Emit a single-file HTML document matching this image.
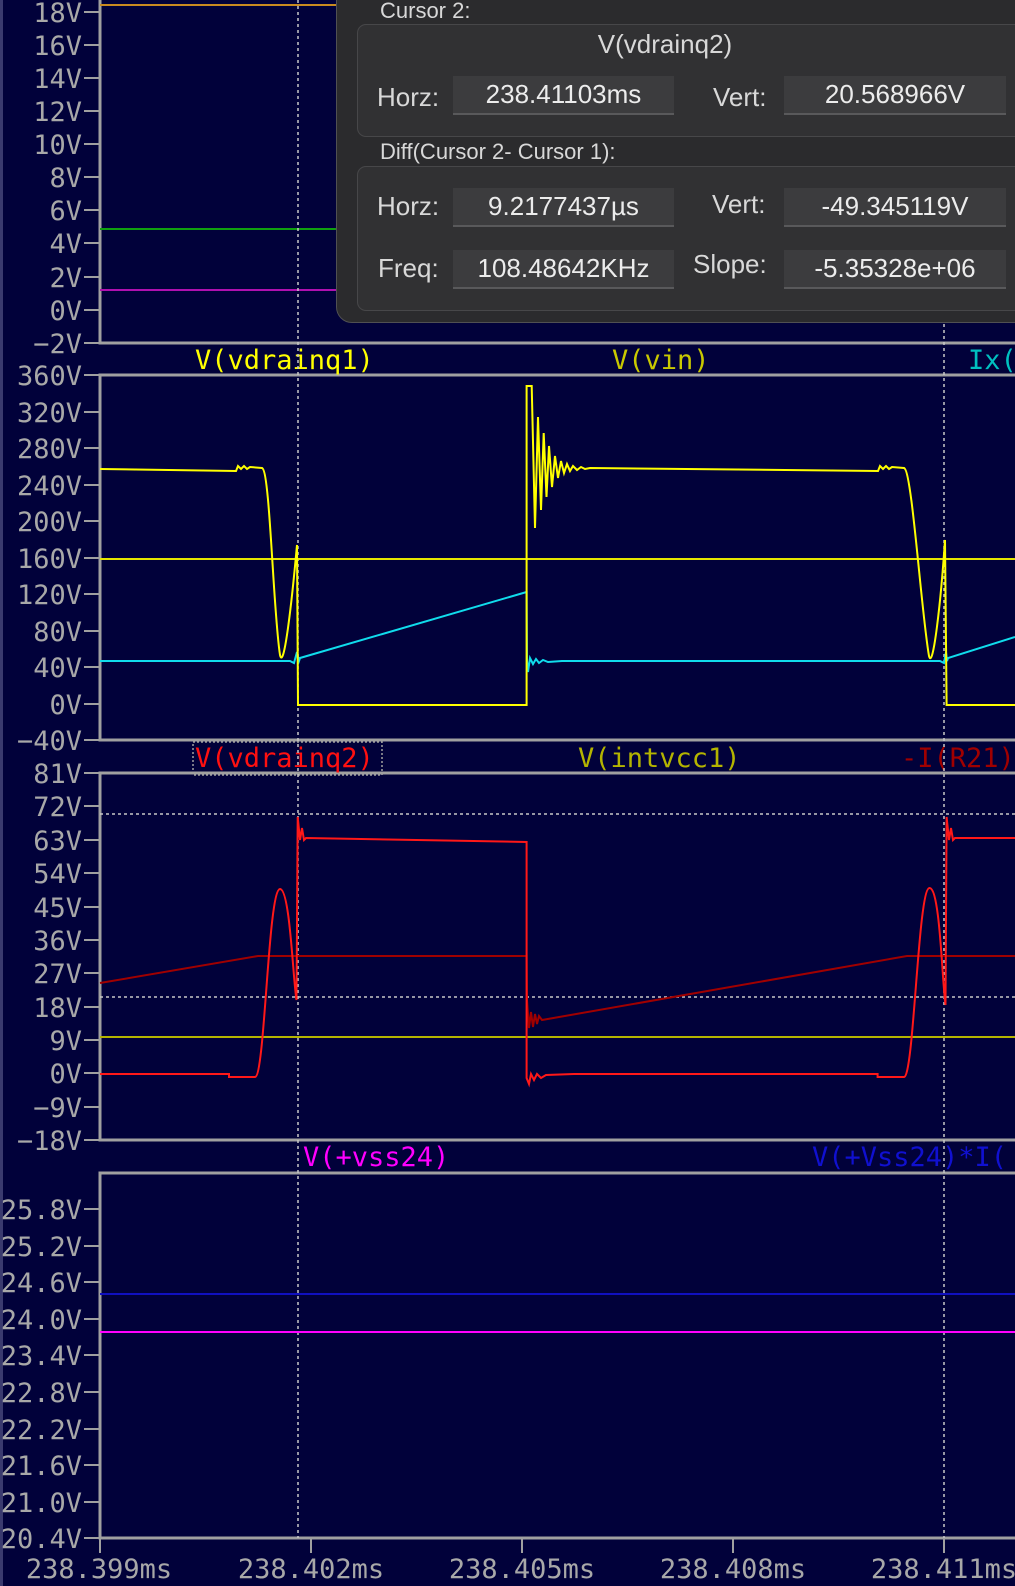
<!DOCTYPE html>
<html><head><meta charset="utf-8"><style>
html,body{margin:0;padding:0;background:#01013a;}
body{width:1015px;height:1586px;overflow:hidden;position:relative;}
svg{position:absolute;left:0;top:0}
.m{font-family:"DejaVu Sans Mono","Liberation Mono",monospace;font-size:27px;}
.y{fill:#a8a8a8;text-anchor:end}
.dlg{position:absolute;left:336px;top:-20px;width:700px;height:343px;background:#2b2b2d;border:1.5px solid #505052;border-radius:16px;font-family:"Liberation Sans",sans-serif;color:#d8d8d8;box-sizing:border-box}
.dlg div{position:absolute;white-space:nowrap}
.box{border:1.5px solid #474749;background:#313133;border-radius:9px}
.f{background:#3c3c3e;border-bottom:2px solid #59595b;text-align:center;font-size:26px;color:#ececec;line-height:37px}
.l{font-size:26px}
</style></head><body>
<svg width="1015" height="1586" viewBox="0 0 1015 1586">
<rect x="0" y="0" width="1015" height="1586" fill="#01013a"/>
<rect x="0" y="0" width="3" height="1586" fill="#3a3a6e"/>
<!-- frames -->
<g stroke="#a0a0a0" stroke-width="3" fill="none">
<path d="M100,0 V343 H1015"/>
<path d="M1015,375 H100 V740 H1015"/>
<path d="M1015,773 H100 V1140 H1015"/>
<path d="M1015,1173 H100 V1538 H1015"/>
</g>
<!-- ticks -->
<g stroke="#a0a0a0" stroke-width="2">
<path d="M84,12H100M84,45H100M84,78H100M84,111H100M84,144H100M84,177H100M84,210H100M84,243H100M84,277H100M84,310H100M84,343H100"/>
<path d="M84,375H100M84,412H100M84,448H100M84,485H100M84,521H100M84,558H100M84,594H100M84,631H100M84,667H100M84,704H100M84,740H100"/>
<path d="M84,773H100M84,806H100M84,840H100M84,873H100M84,907H100M84,940H100M84,973H100M84,1007H100M84,1040H100M84,1073H100M84,1107H100M84,1140H100"/>
<path d="M84,1209H100M84,1246H100M84,1282H100M84,1319H100M84,1355H100M84,1392H100M84,1429H100M84,1465H100M84,1502H100M84,1538H100"/>
<path d="M100,1538V1553M311,1538V1553M522,1538V1553M733,1538V1553M944,1538V1553"/>
</g>
<!-- y labels -->
<g class="m y">
<text x="82" y="22">18V</text><text x="82" y="55">16V</text><text x="82" y="88">14V</text><text x="82" y="121">12V</text><text x="82" y="154">10V</text><text x="82" y="187">8V</text><text x="82" y="220">6V</text><text x="82" y="253">4V</text><text x="82" y="287">2V</text><text x="82" y="320">0V</text><text x="82" y="353">−2V</text>
<text x="82" y="385">360V</text><text x="82" y="422">320V</text><text x="82" y="458">280V</text><text x="82" y="495">240V</text><text x="82" y="531">200V</text><text x="82" y="568">160V</text><text x="82" y="604">120V</text><text x="82" y="641">80V</text><text x="82" y="677">40V</text><text x="82" y="714">0V</text><text x="82" y="750">−40V</text>
<text x="82" y="783">81V</text><text x="82" y="816">72V</text><text x="82" y="850">63V</text><text x="82" y="883">54V</text><text x="82" y="917">45V</text><text x="82" y="950">36V</text><text x="82" y="983">27V</text><text x="82" y="1017">18V</text><text x="82" y="1050">9V</text><text x="82" y="1083">0V</text><text x="82" y="1117">−9V</text><text x="82" y="1150">−18V</text>
<text x="82" y="1219">25.8V</text><text x="82" y="1256">25.2V</text><text x="82" y="1292">24.6V</text><text x="82" y="1329">24.0V</text><text x="82" y="1365">23.4V</text><text x="82" y="1402">22.8V</text><text x="82" y="1439">22.2V</text><text x="82" y="1475">21.6V</text><text x="82" y="1512">21.0V</text><text x="82" y="1548">20.4V</text>
</g>
<g class="m" fill="#a8a8a8" text-anchor="middle">
<text x="99" y="1578">238.399ms</text><text x="311" y="1578">238.402ms</text><text x="522" y="1578">238.405ms</text><text x="733" y="1578">238.408ms</text><text x="944" y="1578">238.411ms</text>
</g>
<!-- trace labels -->
<g class="m">
<text x="195" y="369" fill="#ffff00">V(vdrainq1)</text>
<text x="612" y="369" fill="#c8c800">V(vin)</text>
<text x="968" y="369" fill="#00c0c0">Ix(</text>
<text x="195" y="767" fill="#ff1010">V(vdrainq2)</text>
<text x="578" y="767" fill="#b4b400">V(intvcc1)</text>
<text x="901" y="767" fill="#a00000">-I(R21)</text>
<text x="303" y="1166" fill="#ff00ff">V(+vss24)</text>
<text x="812" y="1166" fill="#1010d0">V(+Vss24)*I(</text>
</g>
<rect x="193" y="742" width="189" height="33" fill="none" stroke="#a0a0a0" stroke-width="1.5" stroke-dasharray="2,2"/>
<!-- panel1 traces -->
<path d="M100,5H1015" stroke="#c88a20" stroke-width="2"/>
<path d="M100,229H1015" stroke="#10a010" stroke-width="2"/>
<path d="M100,290H1015" stroke="#b010b0" stroke-width="2"/>
<!-- cursors -->
<g stroke="#c8c8c8" stroke-width="1.5" stroke-dasharray="3,3">
<path d="M298,0V1538M944,0V1538"/>
<path d="M100,814H1015M100,997H1015"/>
</g>
<!-- panel2 -->
<path d="M100,559H1015" stroke="#e6e600" stroke-width="2"/>
<path d="M100,661H290L294,663L297,652L299,661L300,658L526.6,592L527,661L528,672L530,658L533,664L536,659L539,663L543,660L548,662L562,661H940L944,663L946,652L947,661L948,658L1015,637" stroke="#10dcec" stroke-width="2" fill="none"/>
<path d="M100,469L236,471L238,466L241,469L244,466L247,469L250,467L262,468C270,470 273,610 280,655C284,672 292,600 297,545L298,705H526.6V386H531.7L535,528L538,417L541,510L543.7,433L546.5,497L549,446L552,487L555,456L558,478L561,461L564,473L567,464L570,471L573,466L577,470L581,467L585,469L590,468L878,471L880,466L883,469L886,466L889,469L892,467L904,468C912,470 921,610 929,656C933,672 941,600 945,540L946.6,705H1015" stroke="#ffff00" stroke-width="2" fill="none"/>
<!-- panel3 -->
<path d="M100,1037H1015" stroke="#b4b400" stroke-width="2"/>
<path d="M100,983L258,956H526.6L527,1000L529,1028L531,1012L533,1027L535,1014L537,1024L539,1016L542,1020L907,956H1015" stroke="#a00000" stroke-width="2" fill="none"/>
<path d="M100,1074H229V1077H255C265,1077 268,890 280,889C290,889 293,980 296.5,1000L297.7,817L300,840L302,828L304,840L306,838L526.6,842V1078L529,1084L531,1074L534,1080L537,1074L541,1078L546,1075L574,1074H877.6V1077H904C914,1077 918,888 929.5,888C940,888 942,980 945.5,1005L946.6,817L949,840L951,828L953,840L955,838H1015" stroke="#ff1818" stroke-width="2" fill="none"/>
<!-- panel4 -->
<path d="M100,1294H1015" stroke="#1010c0" stroke-width="2"/>
<path d="M100,1332H1015" stroke="#ff00ff" stroke-width="2"/>
</svg>
<div class="dlg">
<div style="left:43px;top:17px;font-size:22px">Cursor 2:</div>
<div class="box" style="left:20px;top:43px;width:700px;height:111px"></div>
<div class="l" style="left:0;width:700px;text-align:center;top:48px;padding-left:0px"><span style="position:relative;left:-22px">V(vdrainq2)</span></div>
<div class="l" style="left:40px;top:101px">Horz:</div>
<div class="f" style="left:116px;top:95px;width:221px">238.41103ms</div>
<div class="l" style="left:376px;top:101px">Vert:</div>
<div class="f" style="left:447px;top:95px;width:222px">20.568966V</div>
<div style="left:43px;top:158px;font-size:22px">Diff(Cursor 2- Cursor 1):</div>
<div class="box" style="left:20px;top:185px;width:700px;height:143px"></div>
<div class="l" style="left:40px;top:210px">Horz:</div>
<div class="f" style="left:116px;top:207px;width:221px">9.2177437µs</div>
<div class="l" style="left:375px;top:208px">Vert:</div>
<div class="f" style="left:447px;top:207px;width:222px">-49.345119V</div>
<div class="l" style="left:41px;top:272px">Freq:</div>
<div class="f" style="left:116px;top:269px;width:221px">108.48642KHz</div>
<div class="l" style="left:356px;top:268px">Slope:</div>
<div class="f" style="left:447px;top:269px;width:222px">-5.35328e+06</div>
</div>
</body></html>
